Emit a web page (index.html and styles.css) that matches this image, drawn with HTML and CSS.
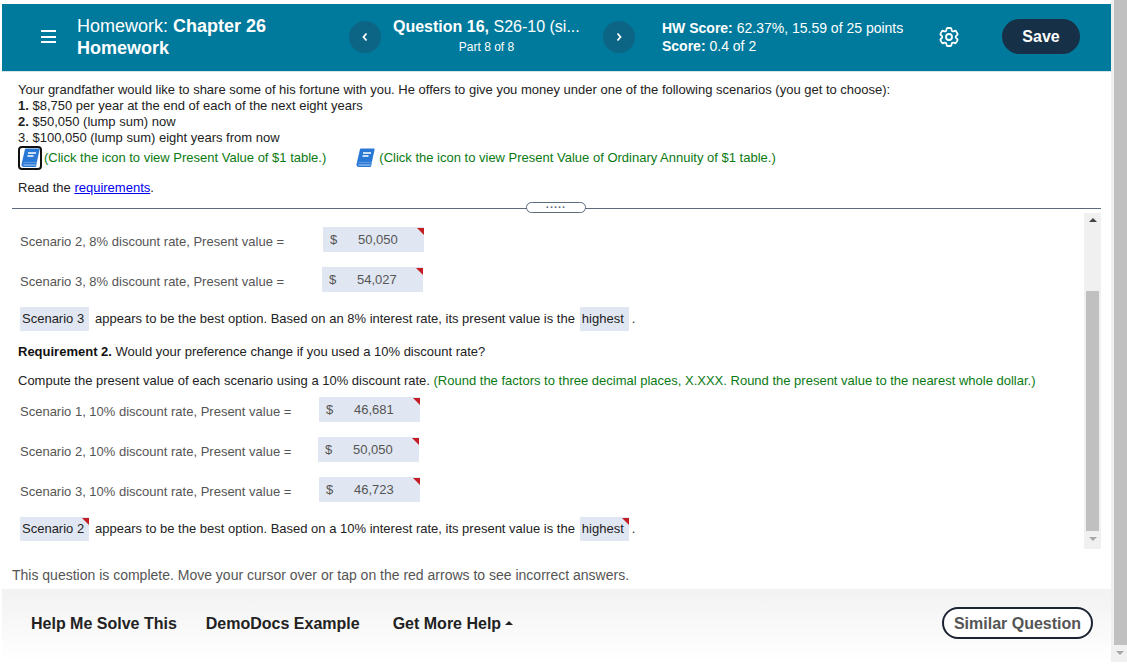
FILE: index.html
```html
<!DOCTYPE html>
<html lang="en">
<head>
<meta charset="utf-8">
<title>Homework: Chapter 26 Homework</title>
<link rel="stylesheet" href="styles.css">
</head>
<body>
<div class="app">
  <main class="main">
    <header class="topbar">
      <button class="menu" aria-label="Menu"><span></span><span></span><span></span></button>
      <div class="title">Homework: <b>Chapter 26 Homework</b></div>
      <button class="nav nav-prev" aria-label="Previous"><svg width="8" height="10" viewBox="0 0 8 10"><path d="M5.5 1.5 2.5 5l3 3.5" fill="none" stroke="#fff" stroke-width="1.8"/></svg></button>
      <div class="question">
        <div class="q-name"><b>Question 16,</b> S26-10 (si...</div>
        <div class="q-part">Part 8 of 8</div>
      </div>
      <button class="nav nav-next" aria-label="Next"><svg width="8" height="10" viewBox="0 0 8 10"><path d="M2.5 1.5 5.5 5l-3 3.5" fill="none" stroke="#fff" stroke-width="1.8"/></svg></button>
      <div class="score">
        <div><b>HW Score:</b> 62.37%, 15.59 of 25 points</div>
        <div><b>Score:</b> 0.4 of 2</div>
      </div>
      <svg class="gear" width="24" height="24" viewBox="0 0 24 24" fill="none" stroke="#fff" stroke-width="1.8" stroke-linejoin="round"><path d="M9.594 3.94c.09-.542.56-.94 1.11-.94h2.593c.55 0 1.02.398 1.11.94l.213 1.281c.063.374.313.686.645.87.074.04.147.083.22.127.324.196.72.257 1.075.124l1.217-.456a1.125 1.125 0 011.37.49l1.296 2.247a1.125 1.125 0 01-.26 1.431l-1.003.827c-.293.24-.438.613-.431.992a6.759 6.759 0 010 .255c-.007.378.138.75.43.99l1.005.828c.424.35.534.954.26 1.43l-1.298 2.247a1.125 1.125 0 01-1.369.491l-1.217-.456c-.355-.133-.75-.072-1.076.124a6.57 6.57 0 01-.22.128c-.331.183-.581.495-.644.869l-.213 1.28c-.09.543-.56.941-1.11.941h-2.594c-.55 0-1.02-.398-1.11-.94l-.213-1.281c-.062-.374-.312-.686-.644-.87a6.52 6.52 0 01-.22-.127c-.325-.196-.72-.257-1.076-.124l-1.217.456a1.125 1.125 0 01-1.369-.49l-1.297-2.247a1.125 1.125 0 01.26-1.431l1.004-.827c.292-.24.437-.613.43-.992a6.932 6.932 0 010-.255c.007-.378-.138-.75-.43-.99l-1.004-.828a1.125 1.125 0 01-.26-1.43l1.297-2.247a1.125 1.125 0 011.37-.491l1.216.456c.356.133.751.072 1.076-.124.072-.044.146-.087.22-.128.332-.183.582-.495.644-.869l.214-1.281z"/><circle cx="12" cy="12" r="3"/></svg>
      <button class="save">Save</button>
    </header>

    <section class="prompt">
      <p>Your grandfather would like to share some of his fortune with you. He offers to give you money under one of the following scenarios (you get to choose):</p>
      <p><b>1.</b> $8,750 per year at the end of each of the next eight years</p>
      <p><b>2.</b> $50,050 (lump sum) now</p>
      <p>3. $100,050 (lump sum) eight years from now</p>
      <div class="tables">
        <span class="book-focus"><svg class="book" width="19" height="20" viewBox="0 0 19 20"><path d="M4 1Q4.300 .5 5 .5H18Q18.800 .5 18.600 1.500L15.800 14.500H3.500Q1.500 14.500 .5 16.500Z" fill="#2a78d6"/><path d="M.5 16.500Q.8 14.500 3 14.500H15.800L15.200 18Q15 19 14 19H3Q.5 19 .5 16.500Z" fill="#2a78d6"/><path d="M2.500 16.500H14.800L14.500 17.500H2.500Z" fill="#b7d3f4"/><path d="M7 5h8M6.500 8h6" stroke="#fff" stroke-width="1.300"/></svg></span>
        <span class="green first-note">(Click the icon to view Present Value of $1 table.)</span>
        <svg class="book book-two" width="19" height="20" viewBox="0 0 19 20"><path d="M4 1Q4.300 .5 5 .5H18Q18.800 .5 18.600 1.500L15.800 14.500H3.500Q1.500 14.500 .5 16.500Z" fill="#2a78d6"/><path d="M.5 16.500Q.8 14.500 3 14.500H15.800L15.200 18Q15 19 14 19H3Q.5 19 .5 16.500Z" fill="#2a78d6"/><path d="M2.500 16.500H14.800L14.500 17.500H2.500Z" fill="#b7d3f4"/><path d="M7 5h8M6.500 8h6" stroke="#fff" stroke-width="1.300"/></svg>
        <span class="green">(Click the icon to view Present Value of Ordinary Annuity of $1 table.)</span>
      </div>
      <p class="read">Read the <a href="#">requirements</a>.</p>
    </section>

    <div class="divider"><span class="pill">.....</span></div>

    <section class="work">
      <div class="scroll-content">
        <div class="row"><span class="label l8a">Scenario 2, 8% discount rate, Present value =</span><span class="field"><span class="dollar">$</span><span class="num">50,050</span></span></div>
        <div class="row"><span class="label l8b">Scenario 3, 8% discount rate, Present value =</span><span class="field"><span class="dollar">$</span><span class="num">54,027</span></span></div>
        <div class="sentence"><span class="pick">Scenario 3</span><span>appears to be the best option. Based on an 8% interest rate, its present value is the</span><span class="pick pick-end">highest</span><span class="dot">.</span></div>
        <p class="req"><b>Requirement 2.</b> Would your preference change if you used a 10% discount rate?</p>
        <p class="compute">Compute the present value of each scenario using a 10% discount rate. <span class="green">(Round the factors to three decimal places, X.XXX. Round the present value to the nearest whole dollar.)</span></p>
        <div class="row"><span class="label l10a">Scenario 1, 10% discount rate, Present value =</span><span class="field"><span class="dollar">$</span><span class="num">46,681</span></span></div>
        <div class="row"><span class="label l10b">Scenario 2, 10% discount rate, Present value =</span><span class="field"><span class="dollar">$</span><span class="num">50,050</span></span></div>
        <div class="row"><span class="label l10a">Scenario 3, 10% discount rate, Present value =</span><span class="field"><span class="dollar">$</span><span class="num">46,723</span></span></div>
        <div class="sentence"><span class="pick flagged">Scenario 2</span><span>appears to be the best option. Based on a 10% interest rate, its present value is the</span><span class="pick pick-end flagged">highest</span><span class="dot">.</span></div>
      </div>
      <div class="inner-scroll">
        <span class="arrow-up"></span>
        <span class="inner-thumb"></span>
        <span class="arrow-down"></span>
      </div>
    </section>

    <p class="status">This question is complete. Move your cursor over or tap on the red arrows to see incorrect answers.</p>

    <footer class="footer">
      <a class="help help-solve">Help Me Solve This</a>
      <a class="help help-demo">DemoDocs Example</a>
      <a class="help help-more">Get More Help <span class="caret"></span></a>
      <button class="similar">Similar Question</button>
    </footer>
  </main>
  <div class="page-scroll">
    <span class="page-thumb"></span>
    <span class="arrow-down"></span>
  </div>
</div>
</body>
</html>
```
FILE: styles.css
```css
* { box-sizing: border-box; }
html, body { margin: 0; padding: 0; background: #fff; }
body { font-family: "Liberation Sans", Arial, sans-serif; font-size: 13px; color: #222; overflow: hidden; }
p { margin: 0; }
button { font-family: inherit; border: 0; padding: 0; cursor: pointer; }

.app { display: flex; width: 1127px; height: 662px; }
.main { width: 1111px; padding-top: 4px; display: flex; flex-direction: column; }

.topbar { margin-left: 2px; width: 1109px; height: 68px; padding-bottom: 2px; background: #007a9c; color: #fff; display: flex; align-items: center; border-bottom: 1px solid #d5e3e9; }
.menu { width: 15px; margin-left: 39px; background: none; display: flex; flex-direction: column; gap: 3.500px; }
.menu span { display: block; height: 2px; background: #fff; }
.title { width: 200px; margin-left: 21px; font-size: 18px; line-height: 22px; }
.nav { width: 32px; height: 32px; border-radius: 50%; background: #0d6585; display: flex; align-items: center; justify-content: center; }
.nav-prev { margin-left: 72px; }
.nav-next { margin-left: 20px; }
.question { width: 190px; margin-left: 12px; text-align: center; margin-top: -2px; }
.q-name { font-size: 16px; line-height: 20px; white-space: nowrap; text-align: left; }
.q-part { font-size: 12px; line-height: 16px; margin-top: 2px; padding-right: 3px; }
.score { width: 275px; margin-left: 27px; font-size: 14px; line-height: 18px; }
.gear { flex: none; }
.save { margin-left: 41px; width: 78px; height: 35px; border-radius: 18px; background: #163147; color: #fff; font-size: 16px; font-weight: 700; }

.prompt { padding: 10px 0 0 18px; height: 136px; line-height: 16px; color: #222; }
.tables { display: flex; align-items: center; height: 24px; }
.green { color: #0a7a12; }
.book-focus { width: 24px; height: 24px; border: 2px solid #111; border-radius: 4px; display: flex; align-items: center; justify-content: center; }
.book { flex: none; }
.first-note { margin-left: 2px; }
.book-two { margin-left: 30px; margin-right: 4px; }
.read { margin-top: 10px; }
.read a { color: #00e; text-decoration: underline; }

.divider { margin: 0 10px 0 12px; height: 1px; background: #5b6b7b; position: relative; }
.pill { position: absolute; left: 514px; top: -6px; width: 60px; height: 11px; background: #fff; border: 1px solid #5b6b7b; border-radius: 6px; font-size: 11px; font-weight: 700; line-height: 3px; letter-spacing: 1px; text-align: center; color: #5b6b7b; }

.work { margin-top: 4px; height: 336px; display: flex; }
.scroll-content { width: 1084px; padding: 14px 0 0 20px; color: #555; }
.row { display: flex; height: 25px; margin-bottom: 15px; align-items: center; }
.label { padding-top: 4px; color: #555; white-space: nowrap; }
.l8a { width: 303px; }
.l8b { width: 302px; }
.l10a { width: 299px; }
.l10b { width: 298px; }
.field { position: relative; width: 101px; height: 25px; background: #e1e7f2; color: #555; display: flex; align-items: center; padding-left: 7px; }
.field::after, .flagged::after { content: ""; position: absolute; top: 1px; right: 0; border-style: solid; border-width: 0 7px 7px 0; border-color: transparent #c41e25 transparent transparent; }
.dollar { width: 28px; }
.sentence { display: flex; align-items: flex-start; height: 24px; line-height: 23px; color: #222; margin-bottom: 12px; white-space: nowrap; }
.pick { position: relative; height: 24px; width: 69px; background: #e1e7f2; padding-left: 2px; margin-right: 6px; }
.pick-end { width: 49px; margin-left: 5px; margin-right: 3px; }
.req { margin-left: -2px; padding-top: 1px; line-height: 16px; color: #222; height: 24px; }
.req b { color: #111; }
.compute { margin: 6px 0 0 -2px; line-height: 16px; color: #222; height: 24px; white-space: nowrap; }

.inner-scroll { width: 17px; height: 336px; background: #f0f0f0; display: flex; flex-direction: column; align-items: center; padding-top: 5px; }
.arrow-up { border-style: solid; border-width: 0 4px 4px; border-color: transparent transparent #444; }
.inner-thumb { width: 13px; height: 240px; margin-top: 69px; background: #c0c0c0; }
.arrow-down { border-style: solid; border-width: 4px 4px 0; border-color: #a8a8a8 transparent transparent; margin-top: 6px; }

.status { margin-left: 12px; font-size: 14px; line-height: 16px; color: #555; margin-top: 18px; height: 22px; }
.footer { margin-left: 2px; width: 1109px; height: 73px; background: linear-gradient(#f2f2f2, #fff); display: flex; align-items: flex-start; padding-top: 18px; }
.help { font-size: 16px; font-weight: 700; line-height: 34px; color: #222; white-space: nowrap; }
.help-solve { margin-left: 29px; }
.help-demo { margin-left: 29px; }
.help-more { margin-left: 33px; }
.caret { display: inline-block; vertical-align: middle; margin-left: -1px; margin-bottom: 3px; border-style: solid; border-width: 0 4px 4px; border-color: transparent transparent #222; }
.similar { margin-left: auto; margin-right: 18px; width: 151px; height: 32px; padding-top: 1px; border-radius: 16px; border: 2px solid #1c2333; background: #fff; color: #555; font-size: 16px; font-weight: 700; }

.page-scroll { width: 16px; background: #f0f0f0; display: flex; flex-direction: column; align-items: center; padding-left: 2px; }
.page-thumb { width: 13px; height: 645px; background: #c0c0c0; }
```
